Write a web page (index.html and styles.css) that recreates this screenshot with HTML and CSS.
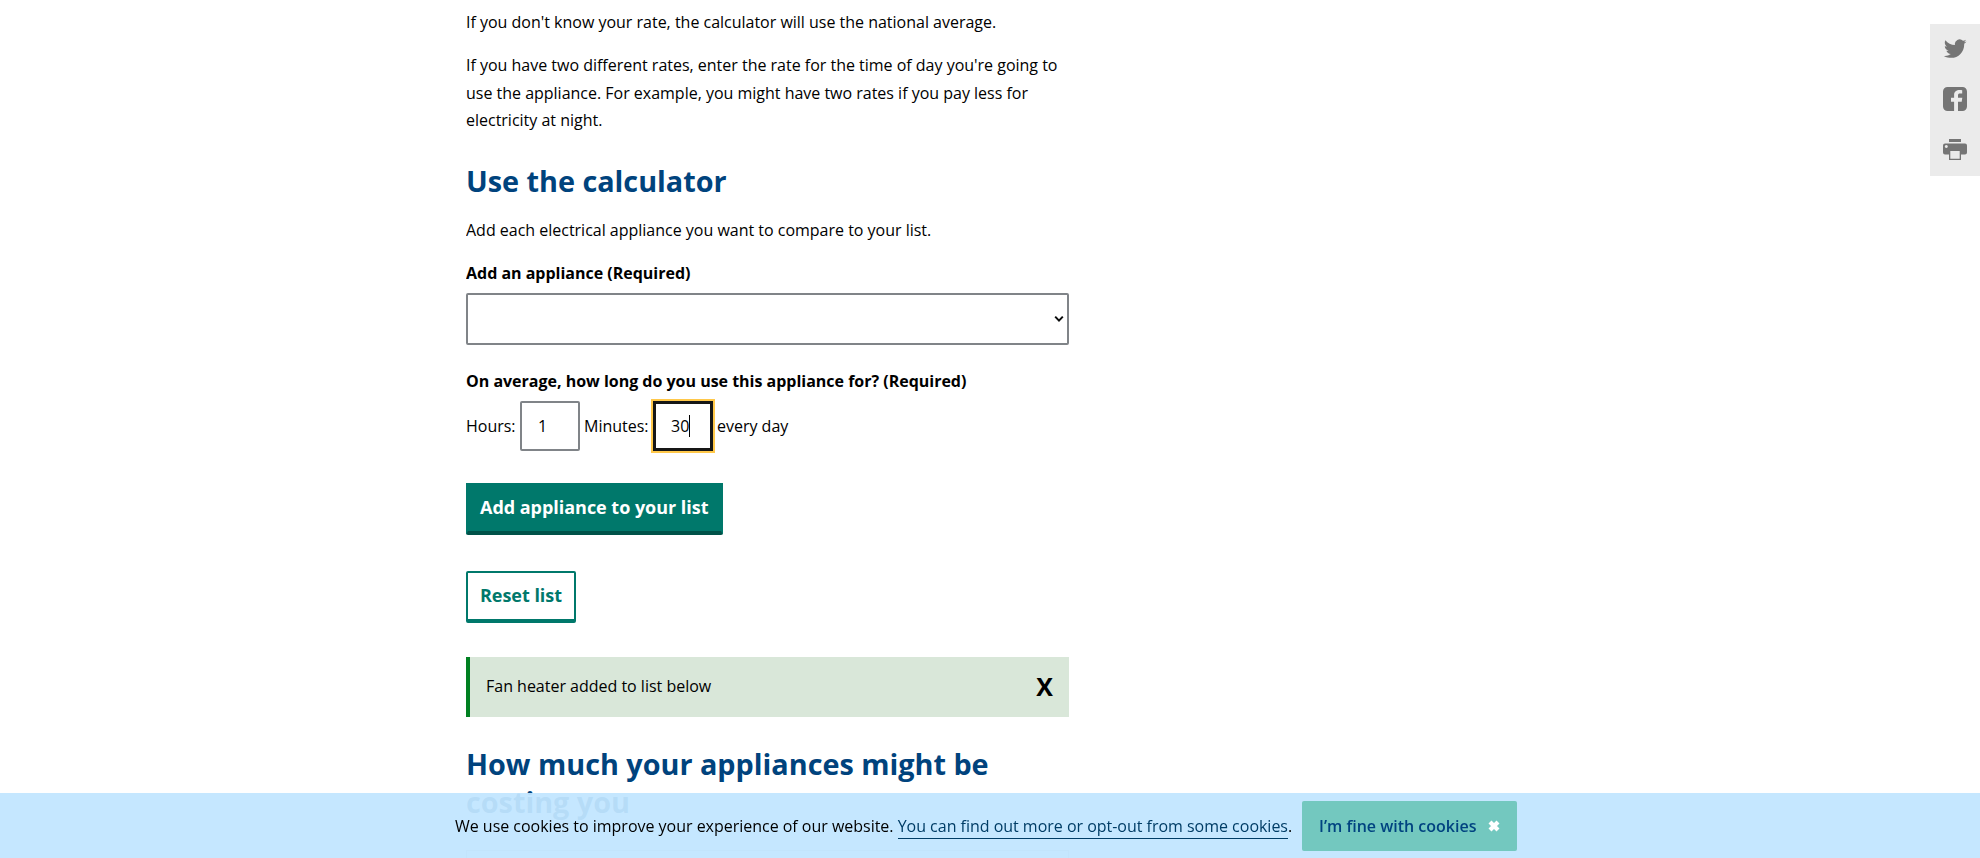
FILE: index.html
```html
<!DOCTYPE html>
<html lang="en">
<head>
<meta charset="utf-8">
<title>Appliance cost calculator</title>
<link rel="stylesheet" href="styles.css">
</head>
<body>
<main class="content">
  <p class="para">If you don't know your rate, the calculator will use the national average.</p>
  <p class="para rates">If you have two different rates, enter the rate for the time of day you're going to use the appliance. For example, you might have two rates if you pay less for electricity at night.</p>
  <h2 class="heading">Use the calculator</h2>
  <p class="para intro">Add each electrical appliance you want to compare to your list.</p>
  <div class="label">Add an appliance (Required)</div>
  <div class="select">
    <svg width="10" height="8" viewBox="0 0 10 8"><path d="M1.2 1.6 5 5.6 8.8 1.6" fill="none" stroke="#0b0c0c" stroke-width="2"/></svg>
  </div>
  <div class="label label-time">On average, how long do you use this appliance for? (Required)</div>
  <div class="time-row">
    <span class="hours">Hours:</span><span class="number">1</span>
    <span class="minutes">Minutes:</span><span class="number focused">30<i class="caret"></i></span>
    <span class="every">every day</span>
  </div>
  <button class="button primary">Add appliance to your list</button>
  <button class="button secondary">Reset list</button>
  <div class="alert"><span>Fan heater added to list below</span><b class="close">X</b></div>
  <h2 class="heading costs">How much your appliances might be costing you</h2>
  <div class="table"></div>
</main>
<aside class="share">
  <svg width="24" height="20" viewBox="0 0 24 20"><path d="M23.5 2.4c-.8.4-1.7.6-2.6.8.9-.6 1.6-1.4 2-2.5-.9.5-1.9.9-2.9 1.1A4.7 4.7 0 0 0 12 6.1C8.100 5.900 4.700 4 2.400 1.200c-1.200 2.100-.6 4.900 1.500 6.300-.8 0-1.500-.2-2.100-.6 0 2.300 1.600 4.200 3.700 4.700-.7.2-1.400.2-2.100.1.600 1.900 2.300 3.200 4.400 3.200A9.500 9.500 0 0 1 .8 16.900c10.500 5.600 20.400-1.500 20.400-11.500v-.6c.9-.7 1.700-1.500 2.300-2.400Z"/></svg>
  <svg width="24" height="24" viewBox="0 0 24 24"><path fill-rule="evenodd" d="M4.500 0h15A4.500 4.500 0 0 1 24 4.500v15a4.500 4.500 0 0 1-4.500 4.500H15v-9.300h3.700l.6-3.900H15V8.500c0-1.300.6-1.900 1.900-1.900h2.300V3.200c-4.700-.8-8.100.5-8.100 4.900v2.700H8v3.900h3.100V24H4.500A4.500 4.500 0 0 1 0 19.500v-15A4.500 4.500 0 0 1 4.500 0Z"/></svg>
  <svg width="24" height="21" viewBox="0 0 24 21"><path fill-rule="evenodd" d="M6 0h12v3H6ZM2 4.500h20a2 2 0 0 1 2 2v7a2 2 0 0 1-2 2h-4V21H6v-5.500H2a2 2 0 0 1-2-2v-7a2 2 0 0 1 2-2ZM7.300 12v7.700h9.400V12ZM3.300 6a1.500 1.500 0 1 0 .01 0Z"/></svg>
</aside>
<div class="cookies">
  <p class="cookie-text">We use cookies to improve your experience of our website. <a class="cookie-link">You can find out more or opt-out from some cookies</a>.</p>
  <button class="cookie-button">I’m fine with cookies
    <svg width="12" height="12" viewBox="0 0 12 12"><path d="M2 2 10 10M10 2 2 10" stroke="#fff" stroke-width="4.200"/></svg>
  </button>
</div>
</body>
</html>
```
FILE: styles.css
```css
* { box-sizing: border-box; }
html { overflow: hidden; }
body {
  margin: 0;
  height: 858px;
  overflow: hidden;
  background: #fff;
  color: #000;
  font: 16px/27.2px "Open Sans", sans-serif;
  letter-spacing: -.01px;
}
.content {
  display: flex;
  flex-direction: column;
  align-items: flex-start;
  width: 603px;
  height: 858px;
  overflow: hidden;
  margin-left: 466px;
  padding-top: 9px;
}
.content > * { flex-shrink: 0; }
.para { margin: 0 0 16px; }
.rates { margin-bottom: 15.100px; line-height: 27.500px; }
.heading {
  margin: 12px 0 16.800px;
  color: #00437d;
  font-size: 28.800px;
  font-weight: 700;
  line-height: 38px;
}
.label { font-weight: 700; margin-bottom: 6px; }
.select {
  display: flex;
  align-items: center;
  justify-content: flex-end;
  width: 603px;
  height: 52px;
  padding-right: 3px;
  border: 2px solid #808488;
  border-radius: 2px;
}
.label-time { margin: 23px 0 5.800px; }
.time-row { display: flex; align-items: center; height: 50px; }
.hours { width: 54px; padding-top: 2px; }
.number {
  display: flex;
  align-items: center;
  width: 60px;
  height: 50px;
  padding: 2px 0 0 16px;
  border: 2px solid #808488;
  border-radius: 2px;
}
.minutes { width: 69px; margin-left: 4px; padding-top: 2px; }
.focused {
  padding-left: 15px;
  border: 3px solid #161616;
  border-radius: 0;
  outline: 2px solid #ffc84a;
}
.caret { width: 1px; height: 22px; margin-top: -2px; background: #000; }
.every { margin-left: 4px; padding-top: 2px; }
.button {
  height: 52px;
  padding: 0 12px 2px;
  border: 2px solid #00786b;
  border-bottom-width: 4px;
  border-radius: 2px;
  font: 700 18px/24px "Open Sans", sans-serif;
  letter-spacing: -.03px;
  text-align: left;
  white-space: nowrap;
}
.primary {
  width: 257px;
  margin-top: 32px;
  border-bottom-color: #005249;
  border-radius: 0 0 2px 2px;
  background: #00786b;
  color: #fff;
}
.secondary { width: 110px; margin-top: 36px; background: #fff; color: #00786b; }
.alert {
  display: flex;
  align-items: center;
  justify-content: space-between;
  width: 603px;
  height: 60px;
  margin-top: 34px;
  padding: 0 16px;
  border-left: 4px solid #008021;
  background: #d9e7d9;
}
.close { padding-bottom: 1px; font-size: 25px; }
.costs { margin-top: 28px; }
.table { width: 603px; height: 60px; margin-top: 12.200px; border: 1px solid #ccc; }
.share {
  position: fixed;
  top: 24px;
  right: 0;
  display: flex;
  flex-direction: column;
  align-items: center;
  justify-content: space-between;
  width: 50px;
  height: 152px;
  padding: 14.500px 0 16px;
  background: #ebebeb;
  fill: #757575;
}
.cookies {
  position: fixed;
  left: 0;
  right: 0;
  bottom: 0;
  display: flex;
  align-items: flex-start;
  height: 65px;
  padding: 8px 0 0 455px;
  background: rgba(193, 230, 255, .94);
}
.cookie-text { width: 847px; margin: 12px 0 0; white-space: nowrap; letter-spacing: -.018px; }
.cookie-link { padding-bottom: 1px; border-bottom: 1px solid #003d66; color: #003d66; }
.cookie-button {
  display: flex;
  align-items: center;
  justify-content: space-between;
  width: 215px;
  height: 50px;
  padding: 0 17px;
  border: 0;
  border-radius: 2px;
  background: #73c8bf;
  color: #004380;
  font: 600 16px/24px "Open Sans", sans-serif;
}
```
